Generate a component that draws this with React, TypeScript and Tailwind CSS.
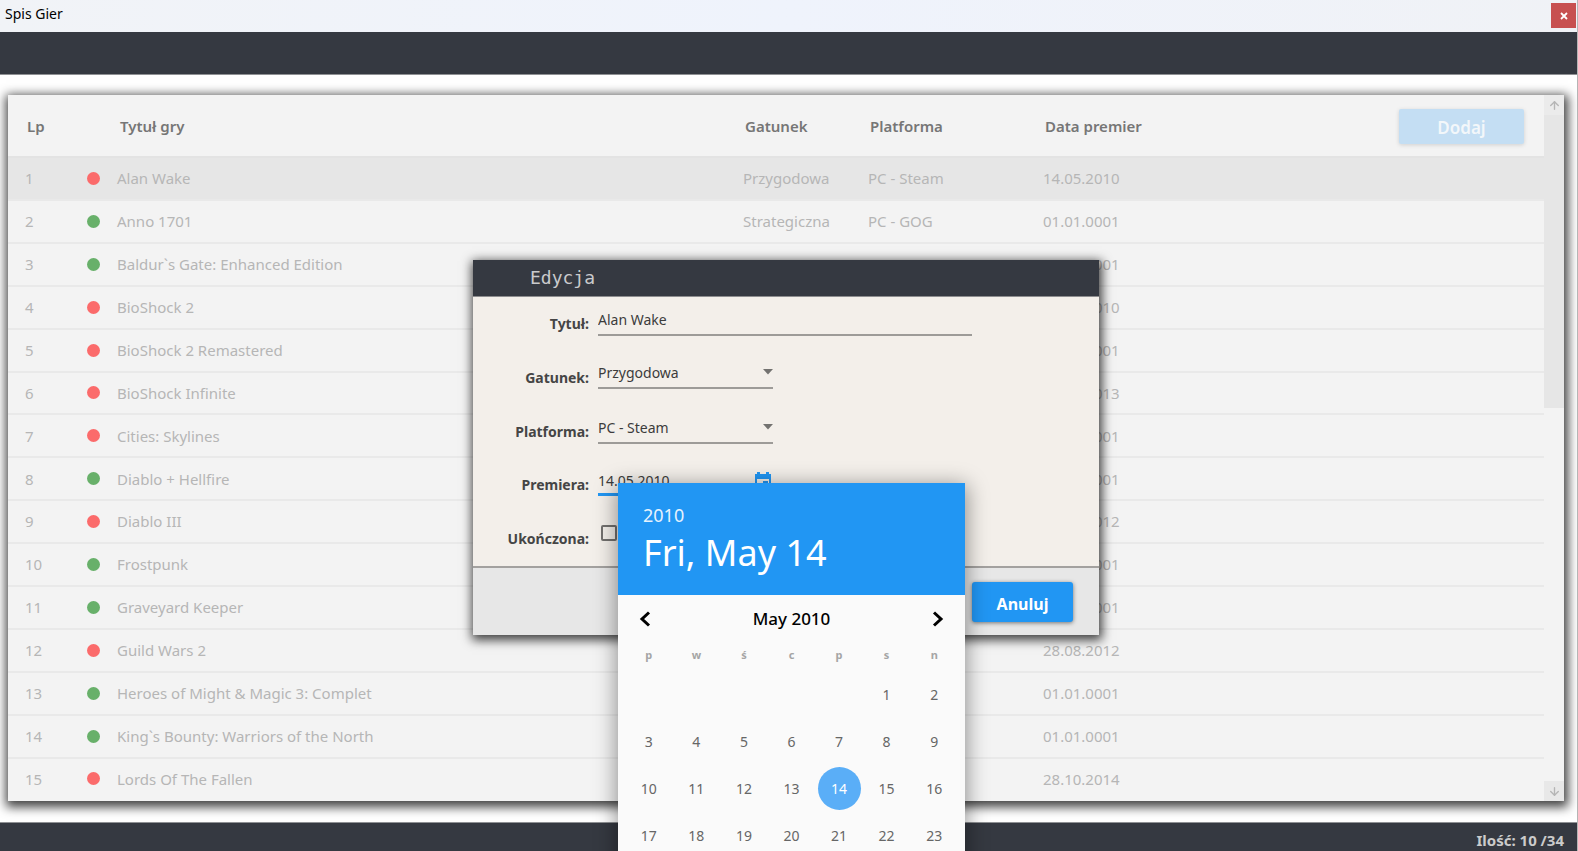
import React from "react";
import { ArrowDown, ArrowUp } from "lucide-react";

type Game = {
  title: string;
  done: boolean;
  genre?: string;
  platform?: string;
  date: string;
};

const games: Game[] = [
  { title: "Alan Wake", done: false, genre: "Przygodowa", platform: "PC - Steam", date: "14.05.2010" },
  { title: "Anno 1701", done: true, genre: "Strategiczna", platform: "PC - GOG", date: "01.01.0001" },
  { title: "Baldur`s Gate: Enhanced Edition", done: true, genre: "RPG", platform: "PC - Steam", date: "01.01.0001" },
  { title: "BioShock 2", done: false, date: "09.02.2010" },
  { title: "BioShock 2 Remastered", done: false, date: "01.01.0001" },
  { title: "BioShock Infinite", done: false, date: "26.03.2013" },
  { title: "Cities: Skylines", done: false, date: "01.01.0001" },
  { title: "Diablo + Hellfire", done: true, date: "01.01.0001" },
  { title: "Diablo III", done: false, date: "15.05.2012" },
  { title: "Frostpunk", done: true, date: "01.01.0001" },
  { title: "Graveyard Keeper", done: true, date: "01.01.0001" },
  { title: "Guild Wars 2", done: false, date: "28.08.2012" },
  { title: "Heroes of Might & Magic 3: Complet", done: true, date: "01.01.0001" },
  { title: "King`s Bounty: Warriors of the North", done: true, date: "01.01.0001" },
  { title: "Lords Of The Fallen", done: false, date: "28.10.2014" },
];

const weekdays = ["p", "w", "ś", "c", "p", "s", "n"];
const days: (number | null)[] = [
  ...Array(5).fill(null),
  ...Array.from({ length: 23 }, (_, i) => i + 1),
];

function GameTable() {
  return (
    <div className="flex min-h-0 flex-1 bg-[#f3f3f3] shadow-[1px_3px_10px_3px_rgba(0,0,0,0.75)]">
      <div className="flex-1 overflow-hidden pb-[2px]">
        <table className="h-full w-full table-fixed border-collapse text-left">
          <colgroup>
            <col className="w-[72px]" />
            <col className="w-[30px]" />
            <col />
            <col className="w-[125px]" />
            <col className="w-[175px]" />
            <col className="w-[356px]" />
            <col className="w-[145px]" />
          </colgroup>
          <thead>
            <tr className="h-[62px] border-b-2 border-[#e3e3e3] text-[15px] text-[#767676]">
              <th className="pt-[2px] pl-[19px] font-semibold">Lp</th>
              <th />
              <th className="pt-[2px] pl-[10px] font-semibold">Tytuł gry</th>
              <th className="pt-[2px] pl-[2px] font-semibold">Gatunek</th>
              <th className="pt-[2px] pl-[2px] font-semibold">Platforma</th>
              <th className="pt-[2px] pl-[2px] font-semibold">Data premier</th>
              <th className="pt-[2px]">
                <button className="block h-[35px] w-[125px] rounded-[2px] bg-[#c4def3] pt-[2px] text-[17px] font-semibold text-[#f3f7fa] shadow-[0_1px_4px_rgba(0,0,0,0.15)]">
                  Dodaj
                </button>
              </th>
            </tr>
          </thead>
          <tbody>
            {games.map((g, i) => (
              <tr
                key={g.title}
                className={
                  "border-b-2 border-[#e9e9e9] text-[15px] text-[#b6b6b6] last:border-b-0 " +
                  (i === 0 ? "bg-[#e6e6e6]" : "")
                }
              >
                <td className="pl-[17px]">{i + 1}</td>
                <td>
                  <span
                    className={
                      "ml-[7px] block h-[13px] w-[13px] rounded-full " +
                      (g.done ? "bg-[#68b06a]" : "bg-[#fb6b6b]")
                    }
                  />
                </td>
                <td className="pl-[7px]">{g.title}</td>
                <td>{g.genre}</td>
                <td>{g.platform}</td>
                <td colSpan={2}>{g.date}</td>
              </tr>
            ))}
          </tbody>
        </table>
      </div>
      <div className="flex w-5 flex-col text-[#b5b5b5]">
        <button aria-label="Przewiń w górę" className="flex h-5 items-center justify-center bg-[#ebebeb]">
          <ArrowUp size={13} strokeWidth={2.5} />
        </button>
        <div className="flex-1">
          <div className="h-[44%] bg-[#e6e6e6]" />
        </div>
        <button aria-label="Przewiń w dół" className="flex h-5 items-center justify-center bg-[#e8e8e8]">
          <ArrowDown size={13} strokeWidth={2.5} />
        </button>
      </div>
    </div>
  );
}

function Chevron({ flip = false }: { flip?: boolean }) {
  return (
    <svg width="22" height="22" viewBox="0 0 22 22" fill="none" stroke="currentColor" strokeWidth="3">
      <path d={flip ? "M7 4.5l7 6.5-7 6.5" : "M15 4.5L8 11l7 6.5"} />
    </svg>
  );
}

function Calendar() {
  return (
    <div className="absolute top-[15px] left-5 w-[347px] bg-[#fafafa] shadow-[0_4px_20px_2px_rgba(0,0,0,0.4)]">
      <div className="h-[112px] bg-[#2196f3] px-[25px] pt-5 text-white">
        <div className="text-lg leading-6 text-[#e6f2fd]">2010</div>
        <div className="text-4xl leading-[52px]">Fri, May 14</div>
      </div>
      <div className="flex h-[48px] items-center justify-between px-4 text-black">
        <button aria-label="Poprzedni miesiąc">
          <Chevron />
        </button>
        <span className="text-[17px] font-medium">May 2010</span>
        <button aria-label="Następny miesiąc">
          <Chevron flip />
        </button>
      </div>
      <div className="grid grid-cols-7 px-[7px] pb-4 text-center">
        {weekdays.map((d, i) => (
          <span key={i} className="h-[28px] pt-[4px] text-[11px] leading-4 font-bold text-[#a5a5a5]">
            {d}
          </span>
        ))}
        {days.map((d, i) =>
          d === null ? (
            <span key={i} />
          ) : (
            <button key={i} className="flex h-[47px] items-center justify-center text-sm text-[#666]">
              <span
                className={
                  "flex h-[43px] w-[43px] items-center justify-center rounded-full " +
                  (d === 14 ? "bg-[#5aaef7] text-white" : "")
                }
              >
                {d}
              </span>
            </button>
          )
        )}
      </div>
    </div>
  );
}

const labelStyle = "self-center text-right text-sm font-bold text-[#454545]";
const fieldStyle =
  "block h-7 w-full appearance-none rounded-none border-b-2 border-[#9d9b98] bg-transparent pb-[3px] text-sm text-[#3c3c3c] outline-none";

function SelectField({ id, value }: { id: string; value: string }) {
  return (
    <div className="relative mt-[11px] w-[175px]">
      <select id={id} defaultValue={value} className={fieldStyle}>
        <option>{value}</option>
      </select>
      <svg className="pointer-events-none absolute top-[8px] right-0 h-[6px] w-[10px]" viewBox="0 0 10 6" fill="#737270">
        <path d="M0 0h10L5 5.5z" />
      </svg>
    </div>
  );
}

function EditDialog() {
  return (
    <div
      role="dialog"
      aria-labelledby="dialog-title"
      className="w-[626px] bg-[#f3efea] shadow-[1px_3px_10px_2px_rgba(0,0,0,0.75)]"
    >
      <h2
        id="dialog-title"
        className="h-[37px] border-b border-[#8d8d8f] bg-[#353941] pl-[57px] font-['DejaVu_Sans_Mono',monospace] text-lg leading-[36px] text-[#c9cacc]"
      >
        Edycja
      </h2>
      <form className="grid grid-cols-[116px_374px] grid-rows-[53px_55px_54px_52px_55px] gap-x-[9px]">
        <label htmlFor="title" className={labelStyle}>Tytuł:</label>
        <div className="mt-[11px]">
          <input id="title" defaultValue="Alan Wake" className={fieldStyle} />
        </div>
        <label htmlFor="genre" className={labelStyle}>Gatunek:</label>
        <SelectField id="genre" value="Przygodowa" />
        <label htmlFor="platform" className={labelStyle}>Platforma:</label>
        <SelectField id="platform" value="PC - Steam" />
        <label htmlFor="premiere" className={labelStyle}>Premiera:</label>
        <div className="relative z-10 mt-[9px] w-[175px]">
          <input
            id="premiere"
            defaultValue="14.05.2010"
            className="block h-7 w-full border-b-3 border-[#2196f3] bg-transparent pb-px text-sm text-[#3c3c3c] outline-none"
          />
          <svg className="absolute top-1 right-[2px] h-[18px] w-4" viewBox="0 0 16 18" fill="#2196f3">
            <path fillRule="evenodd" d="M2 0h3v2h6V0h3v2h2v16H0V2h2zM2 7v9h12V7z" />
            <path d="M8 9h5v5H8z" />
          </svg>
          <Calendar />
        </div>
        <label htmlFor="finished" className={labelStyle}>Ukończona:</label>
        <input
          id="finished"
          type="checkbox"
          className="mt-[14px] ml-[3px] h-4 w-4 appearance-none rounded-[2px] border-2 border-[#72706e]"
        />
      </form>
      <div className="flex h-[69px] justify-end border-t-2 border-[#a3a19f] bg-[#e7e7e7] pt-[14px] pr-[26px]">
        <button className="h-10 w-[101px] rounded-[3px] bg-[#2196f3] pt-[3px] text-base font-bold text-white shadow-[0_1px_4px_rgba(0,0,0,0.5)]">
          Anuluj
        </button>
      </div>
    </div>
  );
}

export default function App() {
  return (
    <div className="relative flex h-screen flex-col overflow-hidden border-r border-[#b5b5b5] bg-white font-['Noto_Sans','Open_Sans',sans-serif]">
      <header className="flex h-8 items-start justify-between bg-linear-to-r from-[#f1f3f7] via-[#eff3fc] to-[#f0f2f6] pr-px pl-[5px]">
        <h1 className="pt-1 text-[14px] leading-5 text-black">Spis Gier</h1>
        <button aria-label="Zamknij" className="mt-[3px] flex h-[25px] w-[25px] items-center justify-center bg-[#c75050]">
          <svg width="8" height="8" viewBox="0 0 8 8" stroke="white" strokeWidth="1.8">
            <path d="M1 1l6 6M7 1l-6 6" />
          </svg>
        </button>
      </header>
      <nav className="h-[43px] border-b border-[#8f9194] bg-[#353941]" />
      <main className="flex min-h-0 flex-1 flex-col pt-5 pr-[13px] pb-[21px] pl-2">
        <GameTable />
      </main>
      <footer className="h-[29px] border-t border-[#8f9194] bg-[#353941] pr-[13px] text-right text-[15px] leading-[34px] font-bold text-[#cbcbcb]">
        Ilość: 10 /34
      </footer>
      <div className="absolute inset-0 flex items-start justify-center pt-[260px] pr-[5px]">
        <EditDialog />
      </div>
    </div>
  );
}
